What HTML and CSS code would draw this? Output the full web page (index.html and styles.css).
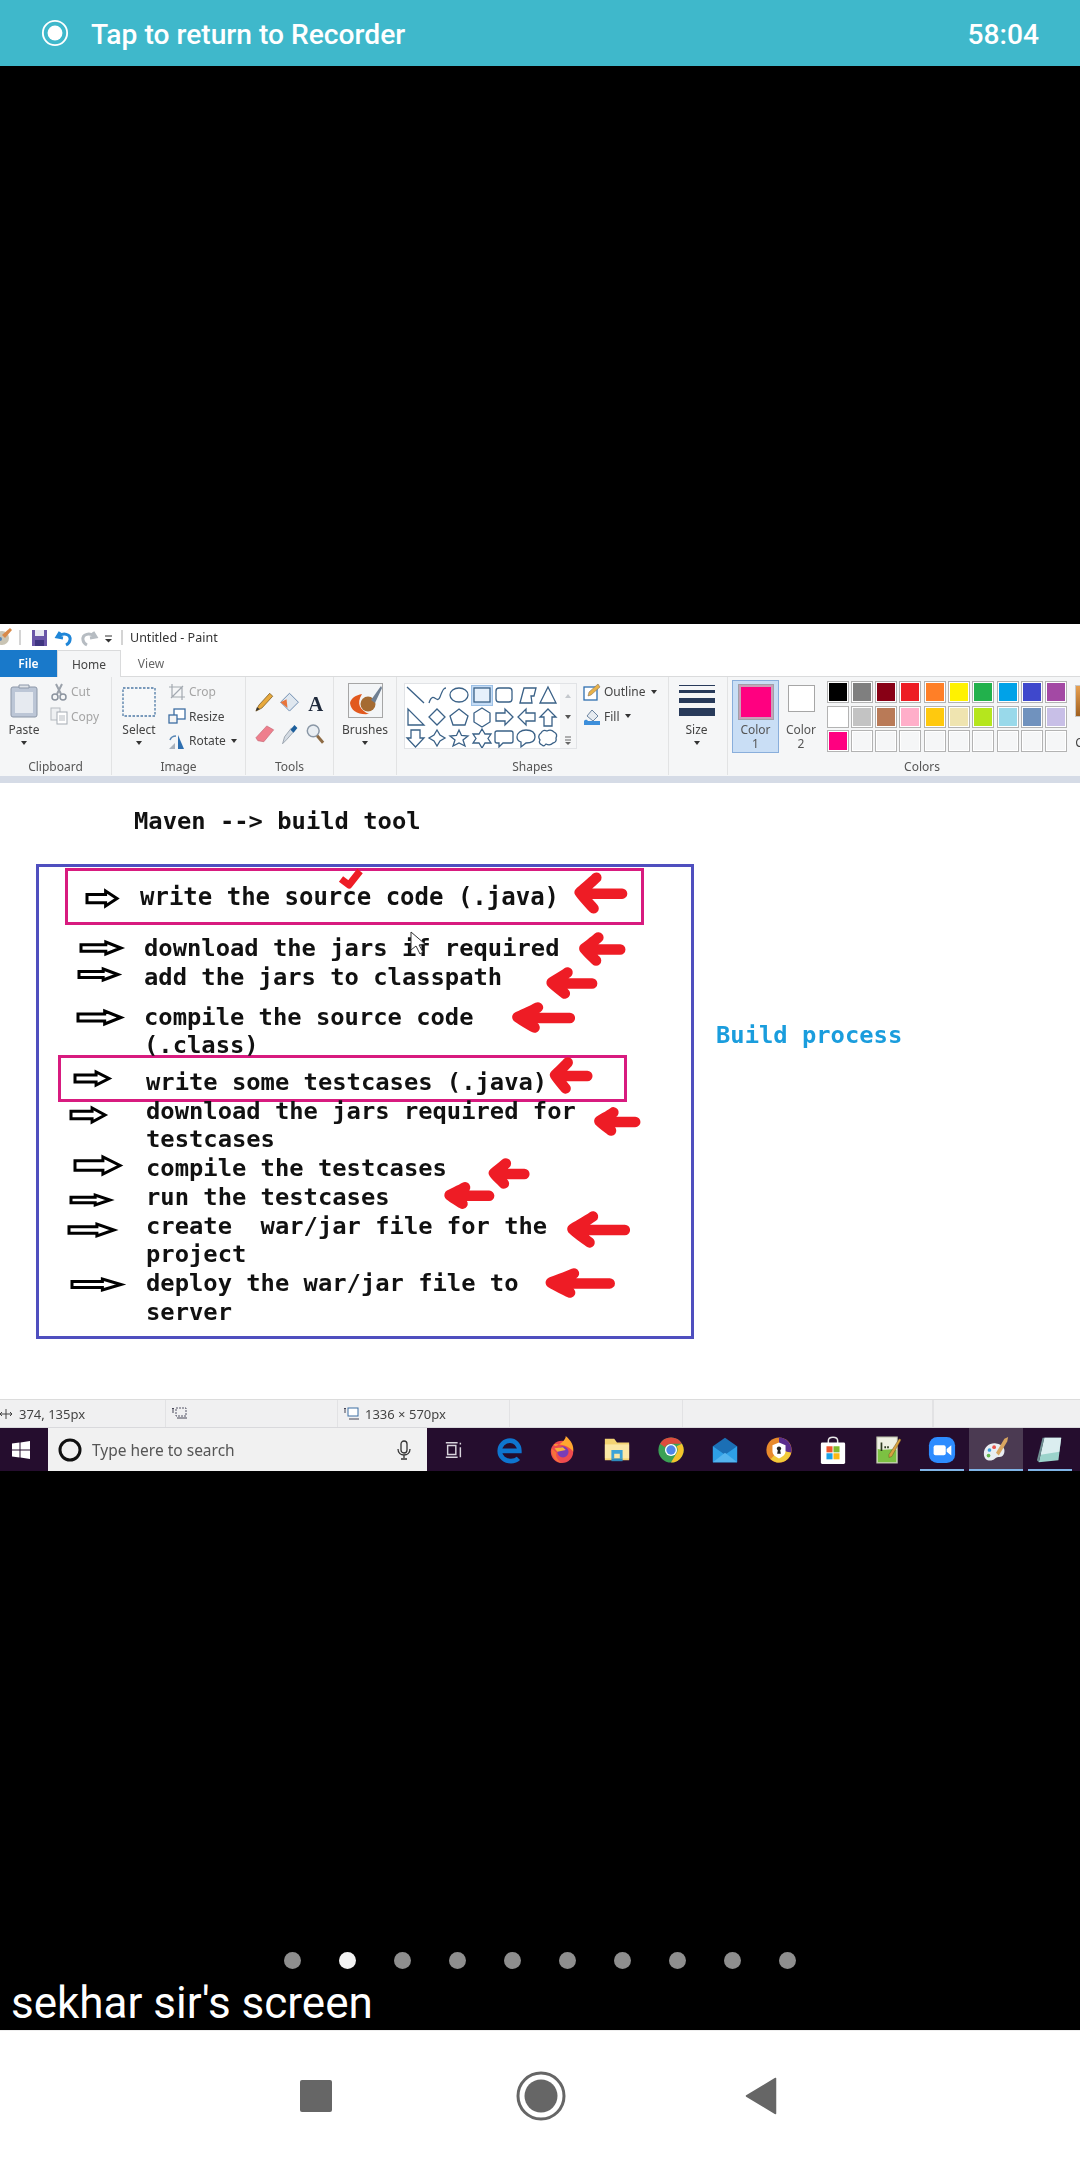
FILE: index.html
```html
<!DOCTYPE html>
<html lang="en">
<head>
<meta charset="utf-8">
<title>Tap to return to Recorder</title>
<link rel="stylesheet" href="styles.css">
</head>
<body>
<div class="app">
  <header class="topbar">
    <svg class="rec" viewBox="0 0 30 30"><circle cx="15" cy="15" r="13" fill="none" stroke="#fff" stroke-width="2"/><circle cx="15" cy="15" r="8" fill="#fff"/></svg>
    <span class="top-title">Tap to return to Recorder</span>
    <span class="top-time">58:04</span>
  </header>
  <div class="gap-top"></div>

  <section class="screen">
    <div class="titlebar">
      <svg class="qat" viewBox="0 0 125 26" width="125" height="26">
        <circle cx="2" cy="14" r="7" fill="#c9c4b4"/><path d="M2 11l8-7 2 2-7 8z" fill="#d98a4a"/><circle cx="0" cy="15" r="2" fill="#5a87b5"/>
        <path d="M20 6v15" stroke="#a9a9a9"/>
        <rect x="32" y="6" width="15" height="16" fill="#6a56a8"/><rect x="35" y="6" width="9" height="6" fill="#e8e8f2"/><rect x="35" y="16" width="9" height="6" fill="#3f3580"/>
        <path d="M60 8l-3 5 6 1M58 13c5-5 13-3 12 3-.3 2-2 4-4 5" fill="none" stroke="#1f86d8" stroke-width="3"/>
        <path d="M93 8l3 5-6 1M95 13c-5-5-13-3-12 3 .3 2 2 4 4 5" fill="none" stroke="#b6bcc2" stroke-width="3"/>
        <path d="M105 12h7" stroke="#333"/><path d="M105 15h7l-3.500 3.500z" fill="#333"/>
        <path d="M122 6v15" stroke="#a9a9a9"/>
      </svg>
      <span class="title-text">Untitled - Paint</span>
    </div>
    <nav class="tabs">
      <span class="tab-file">File</span>
      <span class="tab-home">Home</span>
      <span class="tab-view">View</span>
    </nav>

    <div class="ribbon">
      <div class="group g-clipboard">
        <div class="group-body">
          <div class="big-tool w-paste">
            <svg class="big-icon" viewBox="0 0 28 35"><rect x="1" y="4" width="26" height="30" rx="2" fill="#bcc6d6" stroke="#8c97a8"/><rect x="5" y="9" width="18" height="21" fill="#e6eaf0"/><path d="M9 5h10V2H9z" fill="#dfe3e8" stroke="#8c97a8"/></svg>
            <span class="tool-label">Paste</span><i class="caret"></i>
          </div>
          <div class="small-list">
            <div class="small-row muted"><svg class="ico" viewBox="0 0 18 18"><path d="M6 1l5 10M12 1L7 11" stroke="#9ba2ab" stroke-width="2" fill="none"/><circle cx="5" cy="14" r="3" fill="none" stroke="#8b939e" stroke-width="1.500"/><circle cx="13" cy="14" r="3" fill="none" stroke="#8b939e" stroke-width="1.500"/></svg><span>Cut</span></div>
            <div class="small-row muted"><svg class="ico" viewBox="0 0 18 18"><rect x="1" y="1" width="9" height="12" fill="#eef0f2" stroke="#b5bac0"/><rect x="7" y="5" width="10" height="12" fill="#fff" stroke="#a5abb3"/><path d="M9 9h6M9 11h6M9 13h6" stroke="#b5bac0"/></svg><span>Copy</span></div>
          </div>
        </div>
        <div class="group-label">Clipboard</div>
      </div>

      <div class="group g-image">
        <div class="group-body">
          <div class="big-tool w-select">
            <svg class="big-icon" viewBox="0 0 34 35"><rect x="1" y="5" width="32" height="28" fill="#f7f8f9" stroke="#4f7aa6" stroke-width="1.300" stroke-dasharray="2.500 1.500"/></svg>
            <span class="tool-label">Select</span><i class="caret"></i>
          </div>
          <div class="small-list">
            <div class="small-row muted"><svg class="ico" viewBox="0 0 18 18"><path d="M1 4h13v13M4 1v13h13M3 15L15 3" fill="none" stroke="#a3a9b0" stroke-width="1.200"/></svg><span>Crop</span></div>
            <div class="small-row"><svg class="ico" viewBox="0 0 18 18"><rect x="6" y="2" width="11" height="10" fill="#fff" stroke="#3d6ea3" stroke-width="1.300"/><rect x="1" y="8" width="8" height="8" fill="#f4f4f4" stroke="#3d6ea3" stroke-width="1.300"/></svg><span>Resize</span></div>
            <div class="small-row"><svg class="ico" viewBox="0 0 18 18"><path d="M10 3l6 14h-6z" fill="#2f6fb0"/><path d="M1 17l6-6v6z" fill="#aab2bc"/><path d="M2 8c1-3 3-4 6-4" stroke="#5a87b5" stroke-width="1.500" fill="none"/></svg><span>Rotate</span><i class="caret inline"></i></div>
          </div>
        </div>
        <div class="group-label">Image</div>
      </div>

      <div class="group g-tools">
        <div class="group-body">
          <svg class="tools-svg" viewBox="246 680 88 76" width="88" height="76">
            <path d="M256 711l3-6 11-12 3 3-11 12z" fill="#e8a93c" stroke="#7b5a20" stroke-width=".8"/><path d="M256 711l1-4 3 2z" fill="#333"/>
            <path d="M281 702l9-9 9 9-9 9z" fill="#dfe7ef" stroke="#6f8db0"/><path d="M281 702l6-3 1 9z" fill="#e8743a"/>
            <text x="309" y="711" class="tool-a">A</text>
            <path d="M256 738l11-12 7 4-10 12-6-1z" fill="#ee7f8d" stroke="#c0606c" stroke-width=".6"/>
            <path d="M283 744l2-7 7-9 3 3-8 9z" fill="#d4dbe3" stroke="#7f8b98" stroke-width=".7"/><path d="M291 730l4-5 3 3-4 5z" fill="#1c5f9c"/>
            <circle cx="314" cy="731" r="6" fill="#e9eef3" stroke="#8a97a6" stroke-width="1.500"/><path d="M318 736l6 7" stroke="#8e6b44" stroke-width="3"/>
          </svg>
        </div>
        <div class="group-label">Tools</div>
      </div>

      <div class="group g-brushes">
        <div class="group-body">
          <div class="big-tool w-full">
            <svg class="big-icon" viewBox="0 0 35 35"><rect x=".5" y=".5" width="34" height="34" fill="#f3f5f7" stroke="#a6a6a6"/><path d="M2 20c1 8 8 12 19 11C12 27 8 21 14 11 8 12 3 15 2 20z" fill="#e2591e"/><circle cx="20" cy="21" r="7.500" fill="#a56b32"/><path d="M23 17l10-14 1 2-7 15z" fill="#6f7f92"/></svg>
            <span class="tool-label">Brushes</span><i class="caret"></i>
          </div>
        </div>
        <div class="group-label">&nbsp;</div>
      </div>

      <div class="group g-shapes">
        <div class="group-body shapes-body">
          <div class="shape-box">
            <svg viewBox="404 683 173 66" width="173" height="66">
              <rect x="405" y="684" width="155" height="64" fill="#fff"/>
              <rect x="561" y="684" width="15" height="64" fill="#f5f6f7"/>
              <rect x="471.500" y="685.500" width="21" height="20" fill="#c5dcf5" stroke="#9cc0e6"/>
              <g class="shape-lines">
                <path d="M407 687L424 703"/>
                <path d="M429 703C433 690 437 705 440 697S444 688 446 688"/>
                <ellipse cx="459" cy="695" rx="9" ry="7"/>
                <rect x="474" y="688" width="16" height="14" fill="#e6f0fb"/>
                <rect x="496" y="688" width="16" height="14" rx="3"/>
                <path d="M520 703L524 688H536L534 696H531L532 703Z"/>
                <path d="M548 687L556 703H540Z"/>
                <path d="M408 709V725H424Z"/>
                <path d="M437 709L445 717L437 725L429 717Z"/>
                <path d="M459 709L468 716L465 725H453L450 716Z"/>
                <path d="M482 708L490 713V722L482 727L474 722V713Z"/>
                <path d="M496 713H505V709L513 717L505 725V721H496Z"/>
                <path d="M535 713H526V709L518 717L526 725V721H535Z"/>
                <path d="M548 709L556 717H552V726H544V717H540Z"/>
                <path d="M411 730H420V738H424L415.500 747L407 738H411Z"/>
                <path d="M437 730L440 735L445 738L440 741L437 746L434 741L429 738L434 735Z"/>
                <path d="M459 730L461.500 735.500L468 736L463 740L465 746L459 743L453 746L455 740L450 736L456.500 735.500Z"/>
                <path d="M482 729L485 734L491 734L488 738.500L491 743L485 743L482 748L479 743L473 743L476 738.500L473 734L479 734Z"/>
                <path d="M497 731H511Q513 731 513 733V741Q513 743 511 743H503L499 747V743H497Q495 743 495 741V733Q495 731 497 731Z"/>
                <path d="M526 730C532 730 535 733 535 737C535 741 531 743 526 743L521 747V742C518 741 517 739 517 737C517 733 521 730 526 730Z"/>
                <path d="M541 733Q543 729 547 731Q551 729 554 732Q558 734 556 738Q557 742 553 743Q550 746 546 744Q544 747 542 745Q538 743 540 740Q537 736 541 733Z"/>
              </g>
              <path d="M565 698l3-4 3 4z" fill="#c4c8cd"/><path d="M565 715l3 4 3-4z" fill="#555"/><path d="M565 737h6M565 740h6" stroke="#666"/><path d="M565 742l3 3 3-3z" fill="#666"/>
            </svg>
          </div>
          <div class="small-list outline-list">
            <div class="small-row"><svg class="ico" viewBox="0 0 18 18"><rect x="1" y="4" width="13" height="13" fill="#fff" stroke="#2f6fb0" stroke-width="1.300"/><path d="M5 13l1-4 9-8 2 3-9 8z" fill="#e8b24a" stroke="#765" stroke-width=".5"/></svg><span>Outline</span><i class="caret inline"></i></div>
            <div class="small-row"><svg class="ico" viewBox="0 0 18 18"><path d="M4 9l5-6 6 6-5 5z" fill="#e6ebf0" stroke="#6c84a0"/><path d="M1 18v-4c2-2 3-1 4 0h12v4z" fill="#3d8fdb"/></svg><span>Fill</span><i class="caret inline"></i></div>
          </div>
        </div>
        <div class="group-label">Shapes</div>
      </div>

      <div class="group g-size">
        <div class="group-body">
          <div class="big-tool w-full size-tool">
            <div class="size-lines"><i class="s1"></i><i class="s2"></i><i class="s3"></i><i class="s4"></i></div>
            <span class="tool-label">Size</span><i class="caret"></i>
          </div>
        </div>
        <div class="group-label">&nbsp;</div>
      </div>

      <div class="group g-colors">
        <div class="group-body colors-body">
          <div class="color-btn active">
            <span class="swatch-big"></span>
            <span class="two-line">Color<br>1</span>
          </div>
          <div class="color-btn">
            <span class="swatch-small"></span>
            <span class="two-line">Color<br>2</span>
          </div>
          <div class="palette">
            <i class="c c-black"></i><i class="c c-gray"></i><i class="c c-maroon"></i><i class="c c-red"></i><i class="c c-orange"></i><i class="c c-yellow"></i><i class="c c-green"></i><i class="c c-sky"></i><i class="c c-indigo"></i><i class="c c-purple"></i>
            <i class="c c-white"></i><i class="c c-silver"></i><i class="c c-brown"></i><i class="c c-rose"></i><i class="c c-gold"></i><i class="c c-cream"></i><i class="c c-lime"></i><i class="c c-aqua"></i><i class="c c-steel"></i><i class="c c-lilac"></i>
            <i class="c c-pink"></i><i class="c"></i><i class="c"></i><i class="c"></i><i class="c"></i><i class="c"></i><i class="c"></i><i class="c"></i><i class="c"></i><i class="c"></i>
          </div>
          <div class="edit-colors"><i class="rainbow"></i><span>C</span></div>
        </div>
        <div class="group-label colors-label">Colors</div>
      </div>
    </div>
    <div class="ribbon-edge"></div>

    <main class="canvas">
      <div class="doc-title line">Maven --&gt; build tool</div>
      <div class="doc-row">
        <div class="frame">
          <div class="pink pink-a"><span class="line">write the source code (.java)</span></div>
          <div class="lines lines-a">
            <div class="line">download the jars if required</div>
            <div class="line">add the jars to classpath</div>
          </div>
          <div class="lines lines-b">
            <div class="line">compile the source code</div>
            <div class="line">(.class)</div>
          </div>
          <div class="pink pink-b"><span class="line">write some testcases (.java)</span></div>
          <div class="lines lines-c">
            <div class="line">download the jars required for</div>
            <div class="line">testcases</div>
            <div class="line">compile the testcases</div>
            <div class="line">run the testcases</div>
            <div class="line">create  war/jar file for the</div>
            <div class="line">project</div>
            <div class="line">deploy the war/jar file to</div>
            <div class="line">server</div>
          </div>
        </div>
        <div class="note line">Build process</div>
      </div>

      <svg class="ink" viewBox="0 783 1080 616" width="1080" height="616">
        <defs>
          <path id="blk" class="blk" d="M0 9H62V0L100 20L62 40V31H0Z"/>
          <path id="red" class="red" d="M98 52H30M42 2C30 20 15 35 6 48C14 65 28 85 36 98"/>
        </defs>
        <use href="#blk" transform="translate(87 891) scale(.30 .375)"/>
        <use href="#blk" transform="translate(81 942) scale(.40 .30)"/>
        <use href="#blk" transform="translate(79 969) scale(.39 .275)"/>
        <use href="#blk" transform="translate(78 1011) scale(.43 .325)"/>
        <use href="#blk" transform="translate(75 1072) scale(.34 .325)"/>
        <use href="#blk" transform="translate(71 1108) scale(.34 .35)"/>
        <use href="#blk" transform="translate(75 1157) scale(.45 .425)"/>
        <use href="#blk" transform="translate(71 1195) scale(.39 .25)"/>
        <use href="#blk" transform="translate(69 1224) scale(.45 .30)"/>
        <use href="#blk" transform="translate(72 1279) scale(.49 .275)"/>
        <use href="#red" transform="translate(577 877) scale(.46 .32)"/>
        <use href="#red" transform="translate(582 937) scale(.39 .24)"/>
        <use href="#red" transform="translate(549 972) scale(.44 .22)"/>
        <use href="#red" transform="translate(514 1007) scale(.57 .21)"/>
        <use href="#red" transform="translate(553 1062) scale(.35 .27)"/>
        <use href="#red" transform="translate(597 1112) scale(.39 .19)"/>
        <use href="#red" transform="translate(492 1163) scale(.33 .21)"/>
        <use href="#red" transform="translate(447 1187) scale(.43 .17)"/>
        <use href="#red" transform="translate(569 1216) scale(.57 .27)"/>
        <use href="#red" transform="translate(547 1273) scale(.64 .20)"/>
        <path class="tick" d="M341 879L349 885L360 871"/>
        <path class="pointer" d="M411 932V950L416 946L420 954L423 952L419 945L425 944Z"/>
      </svg>
    </main>

    <div class="statusbar">
      <div class="st st-a"><svg class="st-ico" viewBox="0 0 12 12"><path d="M0 6h12M6 1v10M2 4L0 6l2 2M10 4l2 2-2 2" fill="none" stroke="#444"/></svg><span>374, 135px</span></div>
      <div class="st st-b"><svg class="st-ico w" viewBox="0 0 16 14"><path d="M1 6V1M0 2l1-1 1 1M5 11h10" stroke="#445" fill="none"/><rect x="4" y="1" width="10" height="8" fill="none" stroke="#556" stroke-dasharray="2 1"/></svg></div>
      <div class="st st-c"><svg class="st-ico w" viewBox="0 0 16 14"><path d="M1 6V1M0 2l1-1 1 1M5 12h10" stroke="#445" fill="none"/><rect x="4" y="1" width="10" height="8" fill="#fff" stroke="#3d6ea3"/></svg><span>1336 × 570px</span></div>
      <div class="st st-d"></div>
      <div class="st st-e"></div>
      <div class="st"></div>
    </div>

    <div class="taskbar">
      <div class="start"><svg viewBox="0 0 18 18" width="18" height="18"><path d="M0 2.500L7.500 1.500V8.500H0ZM8.500 1.400L18 0V8.500H8.500ZM0 9.500H7.500V16.500L0 15.500ZM8.500 9.500H18V18L8.500 16.600Z" fill="#fff"/></svg></div>
      <div class="search">
        <svg class="cortana" viewBox="0 0 24 24" width="24" height="24"><circle cx="12" cy="12" r="10" fill="none" stroke="#111" stroke-width="3"/></svg>
        <span class="search-text">Type here to search</span>
        <svg class="mic" viewBox="0 0 14 20" width="14" height="20"><rect x="4" y="1" width="6" height="12" rx="3" fill="none" stroke="#333" stroke-width="1.300"/><path d="M1 9c0 8 12 8 12 0M7 15v3M4 19h6" fill="none" stroke="#333" stroke-width="1.300"/></svg>
      </div>
      <div class="tray">
        <div class="slot"><svg viewBox="0 0 22 22" class="i22"><path d="M2 3h13M2 19h13M4 6h9v10H4zM18 3v2M18 8v11" fill="none" stroke="#d8d4dc" stroke-width="1.600"/></svg></div>
        <div class="slot slot-edge"><svg viewBox="0 0 30 30" class="i30"><path d="M6 16H25C25 9 20 5 15 5C9 5 4 10 4 16C4 23 10 27 16 27C19 27 22 26 24 24" fill="none" stroke="#0e75cf" stroke-width="5"/></svg></div>
        <div class="slot"><svg viewBox="0 0 30 30" class="i30"><circle cx="15" cy="17" r="12" fill="#ee4b4f"/><path d="M6 9C8 14 20 4 19 0C25 5 28 11 27 17C25 13 17 8 6 9Z" fill="#ffa62f"/><path d="M4 13C3 20 7 28 15 29C10 26 8 22 9 18Z" fill="#f6723a"/><circle cx="16" cy="17" r="6" fill="#7a3db6"/><path d="M7 13l9-1 3 3-9 2z" fill="#f8b23a"/></svg></div>
        <div class="slot"><svg viewBox="0 0 30 30" class="i30"><path d="M2 3H12L15 7H28V26H2Z" fill="#f3d373"/><path d="M2 9H28V24H2Z" fill="#fbe8a6"/><path d="M9 24V15H21V24H18V19H12V24Z" fill="#3ba3d8"/><rect x="9" y="24" width="12" height="3" fill="#2d8bbd"/></svg></div>
        <div class="slot"><svg viewBox="0 0 30 30" class="i30"><circle cx="15" cy="15" r="13.500" fill="#3ba155"/><path d="M15 1.500A13.500 13.500 0 0 1 26.700 8.250H15A7 7 0 0 0 8.600 12L3.300 8.300A13.500 13.500 0 0 1 15 1.500Z" fill="#dd4b3e"/><path d="M26.700 8.250A13.500 13.500 0 0 1 15 28.500L20.900 18.500A7 7 0 0 0 21 11Z" fill="#f4c22b"/><circle cx="15" cy="15" r="6.500" fill="#fff"/><circle cx="15" cy="15" r="5" fill="#4e86e8"/></svg></div>
        <div class="slot"><svg viewBox="0 0 30 30" class="i30"><path d="M2 11L15 2L28 11V28H2Z" fill="#1b6fb5"/><path d="M2 11L15 20L28 11V28H2Z" fill="#2e9fe6"/><path d="M2 28L15 18L28 28Z" fill="#54b4ee"/></svg></div>
        <div class="slot"><svg viewBox="0 0 30 30" class="i30"><circle cx="15" cy="15" r="13.500" fill="#e88a2c"/><path d="M15 1.500A13.500 13.500 0 0 1 28 18L15 15Z" fill="#5a2d8e"/><path d="M28 18A13.500 13.500 0 0 1 6 25L15 15Z" fill="#f2cb3a"/><path d="M15 7L22 10V16C22 20 19 22 15 24C11 22 8 20 8 16V10Z" fill="#fff"/><circle cx="15" cy="13.500" r="2.300" fill="#222"/><path d="M14 14h2l1 5h-4z" fill="#222"/></svg></div>
        <div class="slot"><svg viewBox="0 0 30 30" class="i30"><path d="M10 8V5C10 0 20 0 20 5V8" fill="none" stroke="#e8e8e8" stroke-width="1.600"/><rect x="2" y="7" width="26" height="23" rx="1.500" fill="#fff"/><rect x="8" y="11" width="6.500" height="6.500" fill="#f0562d"/><rect x="15.500" y="11" width="6.500" height="6.500" fill="#7fba2e"/><rect x="8" y="18.500" width="6.500" height="6.500" fill="#1aa1e6"/><rect x="15.500" y="18.500" width="6.500" height="6.500" fill="#fcb814"/></svg></div>
        <div class="slot"><svg viewBox="0 0 30 30" class="i30"><rect x="3" y="1" width="22" height="28" fill="#eef0e2" stroke="#a9ad9a"/><path d="M4 14C10 16 18 13 24 15V28H4Z" fill="#7cc142"/><path d="M8 7v9M12 11v2M15 11v2" stroke="#2d3a1f" stroke-width="1.800"/><path d="M16 20L27 3L29 4L19 22L16 23Z" fill="#d9a441" stroke="#6b5020" stroke-width=".5"/></svg></div>
        <div class="slot slot-line"><svg viewBox="0 0 30 30" class="i30"><rect x="1" y="1" width="28" height="28" rx="9" fill="#2d8cff"/><rect x="6" y="10" width="13" height="10.500" rx="2" fill="#fff"/><path d="M20 14L25 10V21L20 17Z" fill="#fff"/></svg></div>
        <div class="slot slot-on"><svg viewBox="0 0 30 30" class="i30"><path d="M2 19C2 11 9 7 15 8C23 9 26 15 23 20C21 24 17 21 14 24C10 28 2 27 2 19Z" fill="#e9eef2"/><circle cx="8" cy="15" r="2" fill="#3ba0dd"/><circle cx="13" cy="12" r="2" fill="#e8534b"/><circle cx="7" cy="21" r="2" fill="#63b54a"/><path d="M15 18L24 3L28 1L27 6L18 21Z" fill="#d9a660"/></svg></div>
        <div class="slot slot-line"><svg viewBox="0 0 30 30" class="i30"><path d="M9 2H27L24 26L3 28Z" fill="#9bd3cb"/><path d="M9 2H27L25 17L5 20Z" fill="#dbeef0"/><path d="M3 28L9 2L7 2L1 26Z" fill="#6f8f92"/></svg></div>
      </div>
    </div>
  </section>

  <div class="lower">
    <div class="dots"><i class="dot"></i><i class="dot dot-on"></i><i class="dot"></i><i class="dot"></i><i class="dot"></i><i class="dot"></i><i class="dot"></i><i class="dot"></i><i class="dot"></i><i class="dot"></i></div>
    <div class="caption">sekhar sir's screen</div>
  </div>

  <footer class="navbar">
    <span class="nav-square"></span>
    <svg class="nav-home" viewBox="0 0 50 50" width="50" height="50"><circle cx="25" cy="25" r="23" fill="none" stroke="#666" stroke-width="3"/><circle cx="25" cy="25" r="16.500" fill="#666"/></svg>
    <svg class="nav-back" viewBox="0 0 32 38" width="32" height="38"><path d="M30.500 1.500V36.500L1.500 19Z" fill="#666" stroke="#666" stroke-width="1.500" stroke-linejoin="round"/></svg>
  </footer>
</div>
</body>
</html>
```
FILE: styles.css
```css
* { box-sizing: border-box; }
html, body { margin: 0; padding: 0; background: #000; }
.app { width: 1080px; height: 2160px; overflow: hidden; display: flex; flex-direction: column; background: #000; }

.topbar { height: 66px; flex: none; background: #3fb8cb; color: #fff; display: flex; align-items: center; padding: 0 41px; font-family: Roboto, sans-serif; font-weight: 500; font-size: 28.200px; }
.rec { width: 28px; height: 28px; flex: none; margin-right: 22px; }
.top-title { flex: 1; padding-top: 3px; }
.top-time { padding-top: 3px; }
.gap-top { height: 558px; flex: none; }

.screen { height: 847px; flex: none; background: #fff; font-family: "Noto Sans", sans-serif; color: #444; font-size: 12px; display: flex; flex-direction: column; filter: blur(.35px); }

.titlebar { height: 26px; flex: none; display: flex; align-items: center; }
.qat { flex: none; }
.title-text { margin-left: 5px; font-size: 12.500px; color: #333; }

.tabs { height: 27px; flex: none; display: flex; border-bottom: 1px solid #dadbdc; }
.tab-file { width: 57px; height: 27px; background: #1979ca; color: #fff; font-weight: 600; display: flex; align-items: center; justify-content: center; }
.tab-home { width: 64px; height: 27px; background: #f5f6f7; border: 1px solid #dadbdc; border-bottom: 0; display: flex; align-items: center; justify-content: center; }
.tab-view { width: 60px; display: flex; align-items: center; justify-content: center; color: #666; }

.ribbon { height: 99px; flex: none; background: #f5f6f7; display: flex; }
.ribbon-edge { height: 7px; flex: none; background: #d5dbe6; }
.group { height: 98px; border-right: 1px solid #e2e3e4; display: flex; flex-direction: column; flex: none; }
.group-body { flex: 1; display: flex; min-height: 0; }
.group-label { height: 16px; line-height: 16px; text-align: center; color: #555; margin-bottom: 0; }
.g-clipboard { width: 112px; }
.g-image { width: 134px; }
.g-tools { width: 88px; }
.g-brushes { width: 63px; }
.g-shapes { width: 272px; }
.g-size { width: 59px; }
.g-colors { width: 352px; border-right: 0; overflow: hidden; }
.colors-label { padding-left: 36px; }

.big-tool { display: flex; flex-direction: column; align-items: center; padding-top: 6px; flex: none; }
.w-paste { width: 48px; }
.w-select { width: 54px; }
.w-full { width: 100%; }
.size-tool { padding-right: 3px; }
.big-icon { height: 35px; width: auto; display: block; }
.tool-label { line-height: 16px; margin-top: 4px; color: #444; }
.caret { display: block; width: 0; height: 0; border: 3.500px solid transparent; border-top: 4px solid #333; border-bottom: 0; margin-top: 3px; }
.caret.inline { margin: 0 0 0 5px; }

.small-list { display: flex; flex-direction: column; padding-top: 2.500px; margin-left: 2px; }
.small-row { height: 24.500px; display: flex; align-items: center; color: #444; white-space: nowrap; }
.small-row.muted { color: #a5a5a5; }
.ico { width: 18px; height: 18px; margin-right: 3px; flex: none; }
.tools-svg { display: block; margin-top: 3px; }
.tool-a { font-family: "Liberation Serif", serif; font-weight: 700; font-size: 21px; fill: #1f2a3c; }

.shapes-body { padding: 6px 0 0 7px; }
.shape-box { width: 173px; height: 66px; flex: none; border: 0; outline: 1px solid #e1e3e6; outline-offset: -1px; }
.shape-box svg { display: block; }
.shape-lines { fill: none; stroke: #3a6187; stroke-width: 1.300; }
.outline-list { margin: -6px 0 0 6px; }

.size-lines { width: 36px; height: 35px; padding-top: 2px; display: flex; flex-direction: column; }
.size-lines i { display: block; background: #283a5a; }
.s1 { height: 1px; }
.s2 { height: 3px; margin-top: 4px; }
.s3 { height: 5px; margin-top: 5px; }
.s4 { height: 8px; margin-top: 5px; }

.colors-body { padding-left: 4px; }
.color-btn { width: 44px; height: 73px; margin-top: 3px; display: flex; flex-direction: column; align-items: center; flex: none; }
.color-btn.active { width: 47px; background: #c9def5; border: 1px solid #89aedb; }
.swatch-big { width: 34px; height: 34px; background: #ff0080; border: 2px solid #c9a0b8; outline: 1px solid #a0a0a8; margin-top: 4px; flex: none; }
.swatch-small { width: 27px; height: 27px; background: #fff; border: 1px solid #a6a6a6; margin-top: 5px; margin-bottom: 8px; flex: none; }
.two-line { line-height: 14px; text-align: center; margin-top: 4px; color: #555; }
.swatch-small + .two-line { margin-top: 3px; }
.palette { display: grid; grid-template-columns: repeat(10, 22px); grid-auto-rows: 22px; column-gap: 2.300px; row-gap: 2.500px; margin: 4px 0 0 3.500px; flex: none; }
.c { display: block; border: 1px solid #b3b3b3; background: #f5f6f7; box-shadow: inset 0 0 0 1px #fff; }
.c-black { background: #000; } .c-gray { background: #7f7f7f; } .c-maroon { background: #880015; } .c-red { background: #ed1c24; } .c-orange { background: #ff7f27; } .c-yellow { background: #fff200; } .c-green { background: #22b14c; } .c-sky { background: #00a2e8; } .c-indigo { background: #3f48cc; } .c-purple { background: #a349a4; }
.c-white { background: #fff; } .c-silver { background: #c3c3c3; } .c-brown { background: #b97a57; } .c-rose { background: #ffaec9; } .c-gold { background: #ffc90e; } .c-cream { background: #efe4b0; } .c-lime { background: #b5e61d; } .c-aqua { background: #99d9ea; } .c-steel { background: #7092be; } .c-lilac { background: #c8bfe7; }
.c-pink { background: #ff0080; }
.edit-colors { margin: 8px 0 0 8px; flex: none; width: 34px; display: flex; flex-direction: column; }
.rainbow { display: block; width: 34px; height: 32px; background: linear-gradient(180deg, #e8a050, #a06020); border: 1px solid #c8c8c8; }
.edit-colors span { margin-top: 19px; line-height: 14px; }

.canvas { height: 616px; flex: none; position: relative; background: #fff; padding-top: 23.500px; }
.line { display: block; font-family: "DejaVu Sans Mono", monospace; font-weight: 700; font-size: 23.800px; line-height: 29px; color: #111; white-space: pre; }
.doc-title { padding-left: 134px; }
.doc-row { display: flex; align-items: flex-start; margin-top: 28px; margin-left: 35.500px; }
.frame { width: 658px; height: 475px; border: 3px solid #4f4fbf; flex: none; }
.note { margin: 157px 0 0 22.500px; color: #1a9ddd; }
.pink { border: 3px solid #d81b7f; display: flex; align-items: center; }
.pink-a { margin: 1px 0 0 26px; width: 579px; height: 57px; padding: 2px 0 0 72.500px; }
.pink-a .line { font-size: 24px; }
.pink-b { margin: -4.500px 0 0 19px; width: 569px; height: 47px; padding: 8px 0 0 85.500px; }
.lines { padding-left: 105.500px; }
.lines-a { margin-top: 9px; }
.lines-b { margin-top: 11.500px; }
.lines-b .line { line-height: 28px; }
.lines-c { margin-top: -5px; padding-left: 107.500px; }
.lines-c .line { line-height: 28.800px; }
.ink { position: absolute; left: 0; top: 0; display: block; pointer-events: none; }
.blk { fill: #fff; stroke: #000; stroke-width: 3; vector-effect: non-scaling-stroke; }
.red { fill: none; stroke: #ee1c25; stroke-width: 10.500; stroke-linecap: round; stroke-linejoin: round; vector-effect: non-scaling-stroke; }
.tick { fill: none; stroke: #ee1c25; stroke-width: 7; stroke-linejoin: round; }
.pointer { fill: #fff; stroke: #333; stroke-width: 1; }

.statusbar { height: 29px; flex: none; background: #f0f0f1; border-top: 1px solid #dcdcdc; border-bottom: 1px solid #d9d9dc; display: flex; font-size: 13px; color: #444; }
.st { height: 100%; display: flex; align-items: center; border-right: 1px solid #e2e2e4; flex: none; }
.st-a { width: 166px; }
.st-b { width: 172px; padding-left: 6px; }
.st-c { width: 172px; padding-left: 6px; }
.st-d { width: 173px; }
.st-e { width: 250px; }
.st-ico { width: 12px; height: 12px; margin-right: 7px; flex: none; }
.st-ico.w { width: 16px; height: 14px; margin-right: 5px; }

.taskbar { height: 43px; flex: none; background: #250d2e; display: flex; overflow: hidden; }
.start { width: 48px; display: flex; align-items: center; justify-content: center; flex: none; padding-right: 6px; }
.search { width: 379px; flex: none; background: #f1f1f1; display: flex; align-items: center; padding: 0 16px 0 10px; }
.cortana { flex: none; }
.search-text { flex: 1; margin-left: 10px; font-size: 15.500px; color: #555; }
.mic { flex: none; }
.tray { display: flex; flex: none; }
.slot { width: 54.200px; height: 43px; display: flex; align-items: center; justify-content: center; flex: none; position: relative; }
.slot-edge { padding-left: 3px; }
.slot-line::after, .slot-on::after { content: ""; position: absolute; left: 5px; right: 5px; bottom: 0; height: 2px; background: #7fb4e6; }
.slot-on { background: #4b3a52; }
.slot-on::after { left: 0; right: 0; }
.i30 { width: 28px; height: 28px; }
.i22 { width: 20px; height: 20px; }

.lower { height: 559px; flex: none; display: flex; flex-direction: column; justify-content: flex-end; padding-bottom: 1px; }
.dots { display: flex; gap: 38.100px; padding-left: 283.500px; margin-bottom: 8.500px; }
.dot { width: 17px; height: 17px; border-radius: 50%; background: #8e8e8e; display: block; flex: none; }
.dot-on { background: #f2f2f2; }
.caption { height: 52px; line-height: 52px; padding-left: 11px; color: #fff; font-family: Roboto, sans-serif; font-size: 44px; white-space: nowrap; }

.navbar { height: 130px; flex: none; background: #fff; border-top: 1px solid #eee; position: relative; display: flex; align-items: center; padding-left: 300px; }
.nav-square { width: 32px; height: 32px; background: #666; border-radius: 2px; flex: none; }
.nav-home { margin-left: 184px; flex: none; }
.nav-back { margin-left: 179px; flex: none; }
```
